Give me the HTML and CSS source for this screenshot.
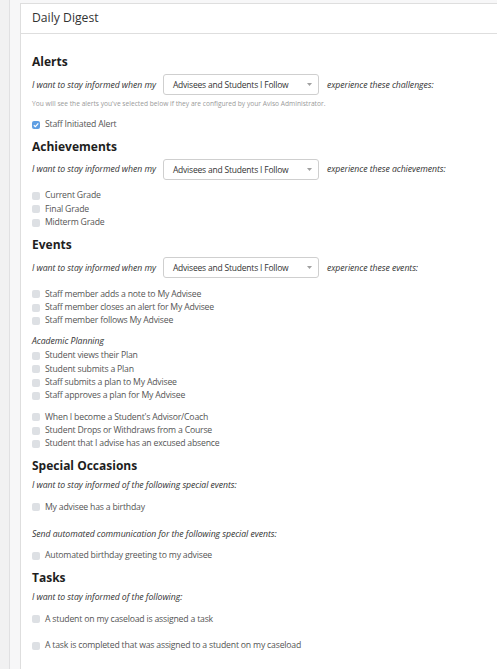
FILE: index.html
```html
<!DOCTYPE html>
<html lang="en">
<head>
    <meta charset="UTF-8">
    <meta name="viewport" content="width=device-width, initial-scale=1.0">
    <title>Daily Digest</title>
    <link rel="stylesheet" href="styles.css">
</head>
<body>
    <div class="page">
        <div class="rail"></div>
        <main class="content">
            <section class="card">
                <header class="card-header">Daily Digest</header>
                <div class="card-body">

                    <!-- Alerts -->
                    <h2 class="first">Alerts</h2>
                    <div class="prompt">
                        <span>I want to stay informed when my</span>
                        <div class="select">
                            <span>Advisees and Students I Follow</span>
                            <svg class="caret" width="5" height="3" viewBox="0 0 5 3"><path d="M0 0H5L2.5 3Z" fill="#a0a0a0"/></svg>
                        </div>
                        <span>experience these challenges:</span>
                    </div>
                    <p class="hint">You will see the alerts you've selected below if they are configured by your Aviso Administrator.</p>
                    <ul class="options after-hint">
                        <li><span class="box on"><svg width="8" height="8" viewBox="0 0 8 8"><path d="M1.8 4.2L3.4 5.7L6.3 2.4" fill="none" stroke="#fff" stroke-width="1.2"/></svg></span>Staff Initiated Alert</li>
                    </ul>

                    <!-- Achievements -->
                    <h2>Achievements</h2>
                    <div class="prompt">
                        <span>I want to stay informed when my</span>
                        <div class="select">
                            <span>Advisees and Students I Follow</span>
                            <svg class="caret" width="5" height="3" viewBox="0 0 5 3"><path d="M0 0H5L2.5 3Z" fill="#a0a0a0"/></svg>
                        </div>
                        <span>experience these achievements:</span>
                    </div>
                    <ul class="options wide">
                        <li><span class="box"></span>Current Grade</li>
                        <li><span class="box"></span>Final Grade</li>
                        <li><span class="box"></span>Midterm Grade</li>
                    </ul>

                    <!-- Events -->
                    <h2>Events</h2>
                    <div class="prompt">
                        <span>I want to stay informed when my</span>
                        <div class="select">
                            <span>Advisees and Students I Follow</span>
                            <svg class="caret" width="5" height="3" viewBox="0 0 5 3"><path d="M0 0H5L2.5 3Z" fill="#a0a0a0"/></svg>
                        </div>
                        <span>experience these events:</span>
                    </div>
                    <ul class="options wide">
                        <li><span class="box"></span>Staff member adds a note to My Advisee</li>
                        <li><span class="box"></span>Staff member closes an alert for My Advisee</li>
                        <li><span class="box"></span>Staff member follows My Advisee</li>
                    </ul>
                    <p class="subhead">Academic Planning</p>
                    <ul class="options tight">
                        <li><span class="box"></span>Student views their Plan</li>
                        <li><span class="box"></span>Student submits a Plan</li>
                        <li><span class="box"></span>Staff submits a plan to My Advisee</li>
                        <li><span class="box"></span>Staff approves a plan for My Advisee</li>
                    </ul>
                    <ul class="options">
                        <li><span class="box"></span>When I become a Student's Advisor/Coach</li>
                        <li><span class="box"></span>Student Drops or Withdraws from a Course</li>
                        <li><span class="box"></span>Student that I advise has an excused absence</li>
                    </ul>

                    <!-- Special Occasions -->
                    <h2>Special Occasions</h2>
                    <p class="lead">I want to stay informed of the following special events:</p>
                    <ul class="options">
                        <li><span class="box"></span>My advisee has a birthday</li>
                    </ul>
                    <p class="lead spaced">Send automated communication for the following special events:</p>
                    <ul class="options">
                        <li><span class="box"></span>Automated birthday greeting to my advisee</li>
                    </ul>

                    <!-- Tasks -->
                    <h2>Tasks</h2>
                    <p class="lead">I want to stay informed of the following:</p>
                    <ul class="options">
                        <li><span class="box"></span>A student on my caseload is assigned a task</li>
                        <li class="apart"><span class="box"></span>A task is completed that was assigned to a student on my caseload</li>
                    </ul>

                </div>
            </section>
        </main>
    </div>
</body>
</html>
```

FILE: styles.css
```css
html, body {
    margin: 0;
    height: 100%;
    overflow: hidden;
}
body {
    font-family: "Open Sans", "Noto Sans", sans-serif;
    background-color: #f7f7f8;
    color: #444;
}
.page {
    display: flex;
    min-height: 100vh;
}
.rail {
    flex: none;
    width: 9px;
    background-color: #f1f1f2;
    border-right: 1px solid #e0e0e2;
}
.content {
    flex: 1;
    min-width: 0;
    padding: 3px 0 0 10px;
}
.card {
    background-color: #fff;
    border: 1px solid #dedede;
    border-right: none;
    min-height: 800px;
}
.card-header {
    height: 29px;
    line-height: 28px;
    padding: 0 11px;
    font-size: 12.2px;
    color: #333;
    border-bottom: 1px solid #dedede;
}
.card-body {
    padding: 20px 11px 40px;
}
h2 {
    margin: 7.7px 0 0;
    font-size: 12px;
    line-height: 16px;
    font-weight: 700;
    color: #1e1e1e;
}
h2.first {
    margin-top: 0;
}
.prompt {
    display: flex;
    align-items: center;
    height: 21px;
    margin-top: 4px;
    font-size: 8.7px;
    letter-spacing: -0.05px;
    font-style: italic;
    color: #333;
    white-space: nowrap;
}
.select {
    display: flex;
    align-items: center;
    justify-content: space-between;
    box-sizing: border-box;
    width: 156px;
    height: 21px;
    margin: 0 8px 0 7px;
    padding: 0 6px 0 9px;
    border: 1px solid #cfcfcf;
    border-radius: 3px;
    font-size: 8.5px;
    letter-spacing: -0.2px;
    font-style: normal;
    color: #333;
}
.caret {
    display: block;
}
.hint {
    margin: 4px 0 0;
    font-size: 6.65px;
    line-height: 10px;
    color: #9a9a9a;
}
.options {
    list-style: none;
    margin: 8px 0 0;
    padding: 0;
}
.options.after-hint {
    margin-top: 9px;
}
.options.wide {
    margin-top: 9.5px;
}
.options.tight {
    margin-top: 0.7px;
}
.options li {
    display: flex;
    align-items: center;
    font-size: 8.7px;
    letter-spacing: -0.2px;
    line-height: 13.3px;
    color: #555;
    white-space: nowrap;
}
.options li.apart {
    margin-top: 13.3px;
}
.box {
    flex: none;
    display: flex;
    width: 8px;
    height: 8px;
    margin-right: 5px;
    border-radius: 2px;
    background-color: #dde0e4;
}
.box.on {
    background-color: #5f9fe3;
}
.subhead, .lead {
    margin: 8px 0 0;
    font-size: 8.7px;
    letter-spacing: -0.05px;
    line-height: 13.3px;
    font-style: italic;
    color: #333;
}
.lead {
    margin-top: 5px;
}
.lead.spaced {
    margin-top: 14.3px;
}
```
